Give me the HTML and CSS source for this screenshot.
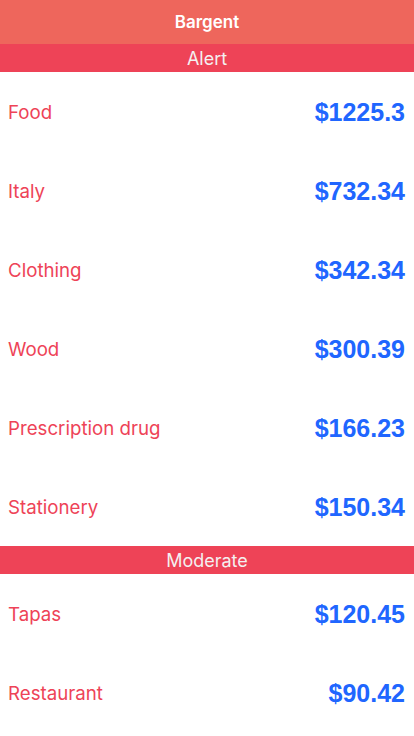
FILE: index.html
```html
<!DOCTYPE html>
<html>
<head>
<meta charset="utf-8">
<link rel="stylesheet" href="styles.css">
</head>
<body>
<div class="app">
  <header class="nav">Bargent</header>
  <div class="section">Alert</div>
  <div class="row"><span class="name">Food</span><span class="price">$1225.3</span></div>
  <div class="row"><span class="name">Italy</span><span class="price">$732.34</span></div>
  <div class="row"><span class="name">Clothing</span><span class="price">$342.34</span></div>
  <div class="row"><span class="name">Wood</span><span class="price">$300.39</span></div>
  <div class="row"><span class="name">Prescription drug</span><span class="price">$166.23</span></div>
  <div class="row"><span class="name">Stationery</span><span class="price">$150.34</span></div>
  <div class="section">Moderate</div>
  <div class="row"><span class="name">Tapas</span><span class="price">$120.45</span></div>
  <div class="row"><span class="name">Restaurant</span><span class="price">$90.42</span></div>
</div>
</body>
</html>
```

FILE: styles.css
```css
html, body {
  margin: 0;
  padding: 0;
  background: #ffffff;
}
.app {
  width: 414px;
  height: 736px;
  overflow: hidden;
  display: flex;
  flex-direction: column;
  font-family: Inter, "Noto Sans", sans-serif;
}
.nav {
  height: 44px;
  flex: none;
  display: flex;
  align-items: center;
  justify-content: center;
  background: #ee665c;
  color: #fff;
  font-weight: 600;
  font-size: 17px;
}
.section {
  height: 28px;
  flex: none;
  display: flex;
  align-items: center;
  justify-content: center;
  background: #ee4357;
  color: #f4f0f0;
  font-size: 18px;
}
.row {
  height: 79px;
  box-sizing: border-box;
  flex: none;
  display: flex;
  align-items: center;
  justify-content: space-between;
  padding: 2px 9px 0 8px;
}
.name {
  color: #ee4357;
  font-size: 18.7px;
}
.price {
  color: #2066ff;
  font-family: "Liberation Sans", Arial, sans-serif;
  font-weight: bold;
  font-size: 25px;
}
```
